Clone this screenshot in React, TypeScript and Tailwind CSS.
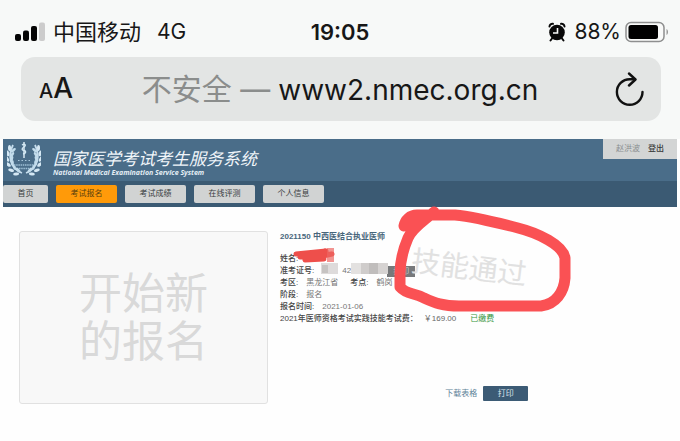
import type { ReactNode } from "react";

const navItems = [
  { label: "首页", current: false },
  { label: "考试报名", current: true },
  { label: "考试成绩", current: false },
  { label: "在线评测", current: false },
  { label: "个人信息", current: false },
];

function Signal() {
  return (
    <svg viewBox="0 0 30 20" className="h-5 w-[30px]" aria-hidden="true">
      <rect x="0" y="12" width="6" height="7" rx="2" fill="#050505" />
      <rect x="8" y="8.500" width="6" height="10.500" rx="2" fill="#050505" />
      <rect x="16" y="4" width="6" height="15" rx="2" fill="#050505" />
      <rect x="24" y="0.500" width="6" height="18.500" rx="2" fill="#cccccc" />
    </svg>
  );
}

function AlarmClock() {
  return (
    <svg viewBox="0 0 18 20" className="h-5 w-[18px]" aria-hidden="true">
      <circle cx="9" cy="10.500" r="7.800" fill="#080808" />
      <path d="M1.500 4.500A3 3 0 0 1 5 1.800M13 1.800A3 3 0 0 1 16.500 4.500M4 16.500L2.500 18.500M14 16.500L15.500 18.500" fill="none" stroke="#080808" strokeWidth="2" strokeLinecap="round" />
      <path d="M9.500 6V11H5" fill="none" stroke="#f7f9f8" strokeWidth="1.600" />
    </svg>
  );
}

function Battery() {
  return (
    <svg viewBox="0 0 44 22" className="h-[22px] w-11" aria-hidden="true">
      <rect x="1" y="1.500" width="38" height="19" rx="5" fill="#f9faf9" stroke="#8e8f8f" strokeWidth="1.500" />
      <rect x="3.500" y="4" width="29.500" height="14" rx="2.500" fill="#000" />
      <path d="M41.500 8C43.500 9 43.500 13 41.500 14Z" fill="#999" />
    </svg>
  );
}

function Reload() {
  return (
    <svg viewBox="0 0 30 34" className="h-[34px] w-[30px]" fill="none" stroke="#111" strokeWidth="2.400" strokeLinecap="round" strokeLinejoin="round" aria-hidden="true">
      <path d="M27.500 20A12.800 12.800 0 1 1 14.700 7.200H20" />
      <path d="M14 1.500L20.500 7.500L14 13.500" />
    </svg>
  );
}

const leaves = [
  [4, 8, -65],
  [2.5, 13, -78],
  [2, 18, -95],
  [3, 23, -115],
  [5.5, 28, -140],
  [10, 31.5, -160],
];

function LaurelHalf() {
  return (
    <g>
      <path d="M6 4C1 14 2 27 15 32" fill="none" stroke="#c6dded" strokeWidth="1.800" />
      {leaves.map(([x, y, r]) => (
        <g key={y} transform={`translate(${x} ${y}) rotate(${r})`}>
          <ellipse cx="1" cy="-1.500" rx="3" ry="1.500" transform="rotate(-25)" fill="#d5e8f4" />
          <ellipse cx="1" cy="2.500" rx="3" ry="1.400" transform="rotate(25)" fill="#c2dcec" />
        </g>
      ))}
    </g>
  );
}

function Emblem() {
  return (
    <svg viewBox="0 0 34 36" className="h-9 w-[34px]" aria-hidden="true">
      <LaurelHalf />
      <g transform="translate(34 0) scale(-1 1)">
        <LaurelHalf />
      </g>
      <path d="M17 1V17" stroke="#e2f0f8" strokeWidth="1.400" />
      <path d="M15 4C18 2 19.500 4.500 17 6C14.500 7.500 14.500 9 17 9.500C19.500 10 19 12.500 16 13" fill="none" stroke="#d4e9f5" strokeWidth="1.400" />
      <path d="M11 19.500H23" stroke="#a9c8dc" strokeWidth="1.200" strokeDasharray="1.500 2" />
      <path d="M7 24H27M12 27.500H22" stroke="#9dbfd5" strokeWidth="1.600" strokeDasharray="1.500 0.700" />
    </svg>
  );
}

function Scribble() {
  return (
    <svg viewBox="0 0 160 40" className="absolute -left-1 -top-2 h-10 w-40" aria-hidden="true">
      <path d="M20 9L50 6L24 12L56 9L29 15L48 14" fill="none" stroke="#ee4f4b" strokeWidth="5" strokeLinecap="round" strokeLinejoin="round" />
      <rect x="51" y="3" width="7" height="14" fill="#ec6663" fillOpacity="0.700" />
      <rect x="45" y="18" width="17" height="11" fill="#dedbdb" />
      <rect x="46" y="20" width="6" height="8" fill="#c6c3c2" />
      <rect x="75" y="18" width="10" height="11" fill="#e3e1e0" />
      <rect x="85" y="18" width="8" height="11" fill="#cfcccb" />
      <rect x="93" y="18" width="9" height="11" fill="#c0bdbc" />
      <rect x="102" y="18" width="10" height="11" fill="#d6d3d2" />
    </svg>
  );
}

function RedCircle() {
  return (
    <svg viewBox="0 0 180 116" className="absolute left-[393px] top-[198px] h-[116px] w-[180px]" fill="none" stroke="#fa5154" strokeWidth="11" strokeLinecap="round" strokeLinejoin="round" aria-hidden="true">
      <path d="M41 14C31 23 20 29 15 40C9 54 7 64 7 76V89C14 97 20 94 31 100C42 105 50 108 66 108H148C163 106 171 94 172 80V60C170 47 145 35 125 30C102 24 73 18 62 17H24C17 17 12 22 11 28L30 20" />
    </svg>
  );
}

function Field({ label, children }: { label: string; children: ReactNode }) {
  return (
    <div className="flex gap-2">
      <dt className="font-medium">{label}</dt>
      <dd className="text-[#777]">{children}</dd>
    </div>
  );
}

export default function App() {
  return (
    <div className="relative min-h-screen bg-[#fefefe] font-['Liberation_Sans','Noto_Sans_CJK_SC',sans-serif] text-[#444]">
      <div className="bg-[#f7f9f8] px-[15px] pb-[18px] font-[Inter,'Noto_Sans_CJK_SC',sans-serif] text-[#171717]">
        <div className="grid h-[57px] grid-cols-[1fr_auto_1fr] items-center pt-[6px]">
          <div className="flex items-center gap-2 text-[22px] leading-7">
            <Signal />
            <span>中国移动</span>
            <span className="pl-2 text-[21px]">4G</span>
          </div>
          <time className="text-[22px] font-semibold leading-7">19:05</time>
          <div className="-mr-1 flex items-center justify-end">
            <AlarmClock />
            <span className="pl-2 pr-1 text-[21px] leading-7">88%</span>
            <Battery />
          </div>
        </div>
        <div className="ml-[6px] mr-1 flex h-16 items-center justify-between rounded-[14px] bg-[#e3e5e4] pl-[18px] pr-4">
          <button type="button" aria-label="文字大小" className="flex items-baseline font-medium leading-9">
            <span className="text-[20px]">A</span>
            <span className="text-[28px]">A</span>
          </button>
          <button type="button" className="flex items-baseline gap-2 whitespace-nowrap text-[28px] leading-10 text-[#171717]">
            <span className="text-[30px] text-[#8b8d8c]">不安全 —</span>
            www2.nmec.org.cn
          </button>
          <button type="button" aria-label="重新加载" className="pl-2">
            <Reload />
          </button>
        </div>
      </div>

      <div className="mx-[3px]">
        <header className="text-white">
          <div className="flex h-[42px] items-start justify-between bg-[#4a6d89]">
            <div className="flex gap-3 pl-1 pt-[2px]">
              <Emblem />
              <div className="pt-[10px] italic">
                <h1 className="text-[17px] leading-[18px] text-[#f1f6fa]">国家医学考试考生服务系统</h1>
                <p className="font-['Open_Sans',sans-serif] text-[7px] font-bold leading-2 text-[#e4eef5]">National Medical Examination Service System</p>
              </div>
            </div>
            <div className="flex h-5 w-[74px] items-center justify-center gap-2 bg-[#d3d5d5] text-[8px] text-[#8a8e90]">
              <span>赵洪波</span>
              <a href="#logout" className="font-medium text-[#383838]">登出</a>
            </div>
          </div>
          <nav className="flex h-[26px] items-center gap-2 bg-[#3b5a73] pb-px">
            {navItems.map((item) => (
              <a
                key={item.label}
                href="#nav"
                className={`flex h-[18px] items-center justify-center rounded-[2px] text-[8px] first:w-[45px] ${item.current ? "w-[61px] bg-[#ff9a09] text-[#5b410f]" : "w-[61px] bg-[#d1d3d3] text-[#383b3d]"}`}
              >
                {item.label}
              </a>
            ))}
          </nav>
        </header>

        <main className="flex items-start gap-3 px-4 pt-6">
          <button type="button" className="h-[173px] w-[249px] shrink-0 rounded-[3px] border border-[#e1e1e1] bg-[#f8f8f8] text-[43px] leading-[48px] text-[#d9d9d9]">
            开始新
            <br />
            的报名
          </button>
          <section className="text-[8px] leading-3">
            <h2 className="pb-[10px] font-bold text-[#48667b]">2021150 中西医结合执业医师</h2>
            <dl className="relative">
              <Scribble />
              <Field label="姓名:">&nbsp;</Field>
              <Field label="准考证号:">
                <span className="flex items-center pl-[20px]">
                  42
                  <button type="button" className="ml-[36px] h-[11px] w-[28px] bg-[#77797b] text-[8px] leading-[11px] text-[#c8c8c8]">打印</button>
                </span>
              </Field>
              <div className="flex gap-3">
                <Field label="考区:">黑龙江省</Field>
                <Field label="考点:">鹤岗</Field>
              </div>
              <Field label="阶段:">报名</Field>
              <Field label="报名时间:">2021-01-06</Field>
              <div className="flex gap-[6px]">
                <dt className="font-medium">2021年医师资格考试实践技能考试费：</dt>
                <dd className="text-[#666]">￥169.00</dd>
                <dd className="pl-2 text-[#36953d]">已缴费</dd>
              </div>
            </dl>
            <div className="flex items-center justify-end gap-[6px] pt-[61px]">
              <a href="#download" className="text-[#5e8298]">下载表格</a>
              <button type="button" className="-mr-[34px] h-[15px] w-[45px] rounded-[1px] bg-[#3c5b75] text-[8px] leading-3 text-[#dce6ed]">打印</button>
            </div>
          </section>
        </main>
      </div>

      <div className="absolute left-[411px] top-[250px] rotate-[7deg] text-[29px] leading-9 text-[#e1e1e1]">技能通过</div>
      <RedCircle />
    </div>
  );
}
